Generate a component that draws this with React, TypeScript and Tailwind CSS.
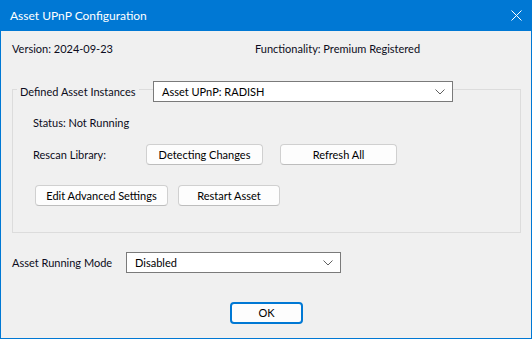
const font = { fontFamily: 'Lato, "Noto Sans", sans-serif' };

const btn =
  "flex h-[21px] items-center justify-center whitespace-nowrap rounded-[4px] border border-[#d0d0d0] border-b-[#bdbdbd] bg-[#fdfdfd] text-[11px] text-black";

const Chevron = () => (
  <svg width="10" height="6" viewBox="0 0 10 6" className="shrink-0">
    <path d="M0.5 0.5 L5 5 L9.5 0.5" fill="none" stroke="#606060" strokeWidth="1" />
  </svg>
);

const Select = ({ value, className }: { value: string; className: string }) => (
  <div
    className={`flex h-[21px] shrink-0 items-center justify-between border border-[#7a7a7a] bg-white pl-[8px] pr-[7px] text-[11px] text-black ${className}`}
  >
    <span className="whitespace-nowrap">{value}</span>
    <Chevron />
  </div>
);

export default function App() {
  return (
    <div className="flex h-[339px] w-[532px] flex-col bg-[#0078d4]" style={font}>
      <div className="flex h-[31px] items-center justify-between pl-[10px] pr-[10px] text-[12px] text-white">
        <span>Asset UPnP Configuration</span>
        <svg width="11" height="11" viewBox="0 0 11 11">
          <path d="M0.5 0.5 L10.5 10.5 M10.5 0.5 L0.5 10.5" stroke="white" strokeWidth="1" />
        </svg>
      </div>

      <div className="mx-px mb-px flex flex-1 flex-col whitespace-nowrap bg-[#f0f0f0] pl-[11px] pt-[10px] text-[11px] leading-[16px] text-[#0c0c20]">
        <div className="flex">
          <span className="w-[243px]">Version: 2024-09-23</span>
          <span>Functionality: Premium Registered</span>
        </div>

        <div className="mt-[32px] h-[144px] w-[509px] border border-[#dcdcdc]">
          <div className="-mt-[9px] flex items-center">
            <div className="w-[140px] shrink-0 pl-[4px]">
              <span className="bg-[#f0f0f0] px-[3px]">Defined Asset Instances</span>
            </div>
            <Select value="Asset UPnP: RADISH" className="w-[300px]" />
          </div>

          <div className="mt-[13px] pl-[20px]">Status: Not Running</div>

          <div className="mt-[13px] flex items-center pl-[20px]">
            <span className="w-[113px]">Rescan Library:</span>
            <button className={`${btn} w-[117px]`}>Detecting Changes</button>
            <button className={`${btn} ml-[17px] w-[117px]`}>Refresh All</button>
          </div>

          <div className="mt-[20px] flex items-center pl-[22px]">
            <button className={`${btn} w-[133px]`}>Edit Advanced Settings</button>
            <button className={`${btn} ml-[10px] w-[102px]`}>Restart Asset</button>
          </div>
        </div>

        <div className="mt-[19px] flex items-center">
          <span className="w-[114px]">Asset Running Mode</span>
          <Select value="Disabled" className="w-[215px]" />
        </div>

        <div className="mt-[29px] pl-[218px]">
          <button className="flex h-[22px] w-[73px] items-center justify-center rounded-[4px] border-2 border-[#0078d4] bg-[#fdfdfd] text-[11px] text-black">
            OK
          </button>
        </div>
      </div>
    </div>
  );
}
